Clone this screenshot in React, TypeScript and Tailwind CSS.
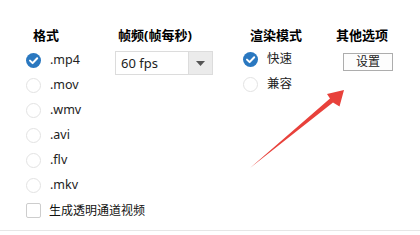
import React from "react";

const font = { fontFamily: '"Noto Sans", "Noto Sans CJK SC", sans-serif' };

function Radio({ checked }: { checked?: boolean }) {
  if (checked) {
    return (
      <svg width="15" height="15" viewBox="0 0 15 15" className="shrink-0">
        <circle cx="7.5" cy="7.5" r="7.5" fill="#2a78c0" />
        <path d="M4 7.6 L6.6 10.1 L11.2 5.2" fill="none" stroke="#fff" strokeWidth="2" strokeLinecap="round" strokeLinejoin="round" />
      </svg>
    );
  }
  return (
    <svg width="15" height="15" viewBox="0 0 15 15" className="shrink-0">
      <circle cx="7.5" cy="7.5" r="7" fill="#fff" stroke="#e2e2e2" strokeWidth="1" />
    </svg>
  );
}

function RadioRow({ label, checked }: { label: string; checked?: boolean }) {
  return (
    <div className="flex h-[25px] items-center gap-[9px] whitespace-nowrap">
      <Radio checked={checked} />
      <span className="text-[12.5px] leading-none text-[#222]">{label}</span>
    </div>
  );
}

export default function App() {
  return (
    <div className="relative h-[235px] w-[420px] overflow-hidden bg-white" style={font}>
      <div className="flex h-[231px] border-b border-[#e6e6e6] pt-[27px]">
        <div className="ml-[26px] flex w-[89px] flex-col">
          <div className="pl-[7px] text-[13px] font-bold leading-[17px] text-black">格式</div>
          <div className="mt-[4px] flex flex-col">
            <RadioRow label=".mp4" checked />
            <RadioRow label=".mov" />
            <RadioRow label=".wmv" />
            <RadioRow label=".avi" />
            <RadioRow label=".flv" />
            <RadioRow label=".mkv" />
            <div className="flex h-[25px] items-center gap-[8px] whitespace-nowrap">
              <div className="h-[15px] w-[15px] shrink-0 rounded-[2px] border border-[#cdcdcd] bg-white" />
              <span className="text-[12px] leading-none text-[#111]">生成透明通道视频</span>
            </div>
          </div>
        </div>
        <div className="flex w-[128px] flex-col">
          <div className="pl-[3px] text-[13px] font-bold leading-[17px] text-black">帧频(帧每秒)</div>
          <div className="mt-[7px] flex h-[24px] w-[98px] border border-[#dcdcdc] bg-white">
            <div className="flex flex-1 items-center pl-[5px] text-[13px] leading-none text-[#222]">60 fps</div>
            <div className="flex w-[24px] items-center justify-center border-l border-[#dcdcdc] bg-[#ebebeb]">
              <svg width="9" height="5" viewBox="0 0 9 5">
                <path d="M0 0 L9 0 L4.5 5 Z" fill="#555" />
              </svg>
            </div>
          </div>
        </div>
        <div className="flex w-[93px] flex-col">
          <div className="pl-[7px] text-[13px] font-bold leading-[17px] text-black">渲染模式</div>
          <div className="mt-[3px] flex flex-col">
            <RadioRow label="快速" checked />
            <RadioRow label="兼容" />
          </div>
        </div>
        <div className="flex flex-col">
          <div className="text-[13px] font-bold leading-[17px] text-black">其他选项</div>
          <div className="ml-[7px] mt-[9px] flex h-[18px] w-[50px] items-center justify-center border border-[#adadad] bg-[#fdfdfd] text-[12px] leading-none text-[#222]">
            设置
          </div>
        </div>
      </div>
      <svg className="absolute left-0 top-0" width="420" height="235" viewBox="0 0 420 235">
        <polygon points="250,168 333,102.5 339.5,106.5 344,90 327,94 330,98.5" fill="#e8413b" />
      </svg>
    </div>
  );
}
